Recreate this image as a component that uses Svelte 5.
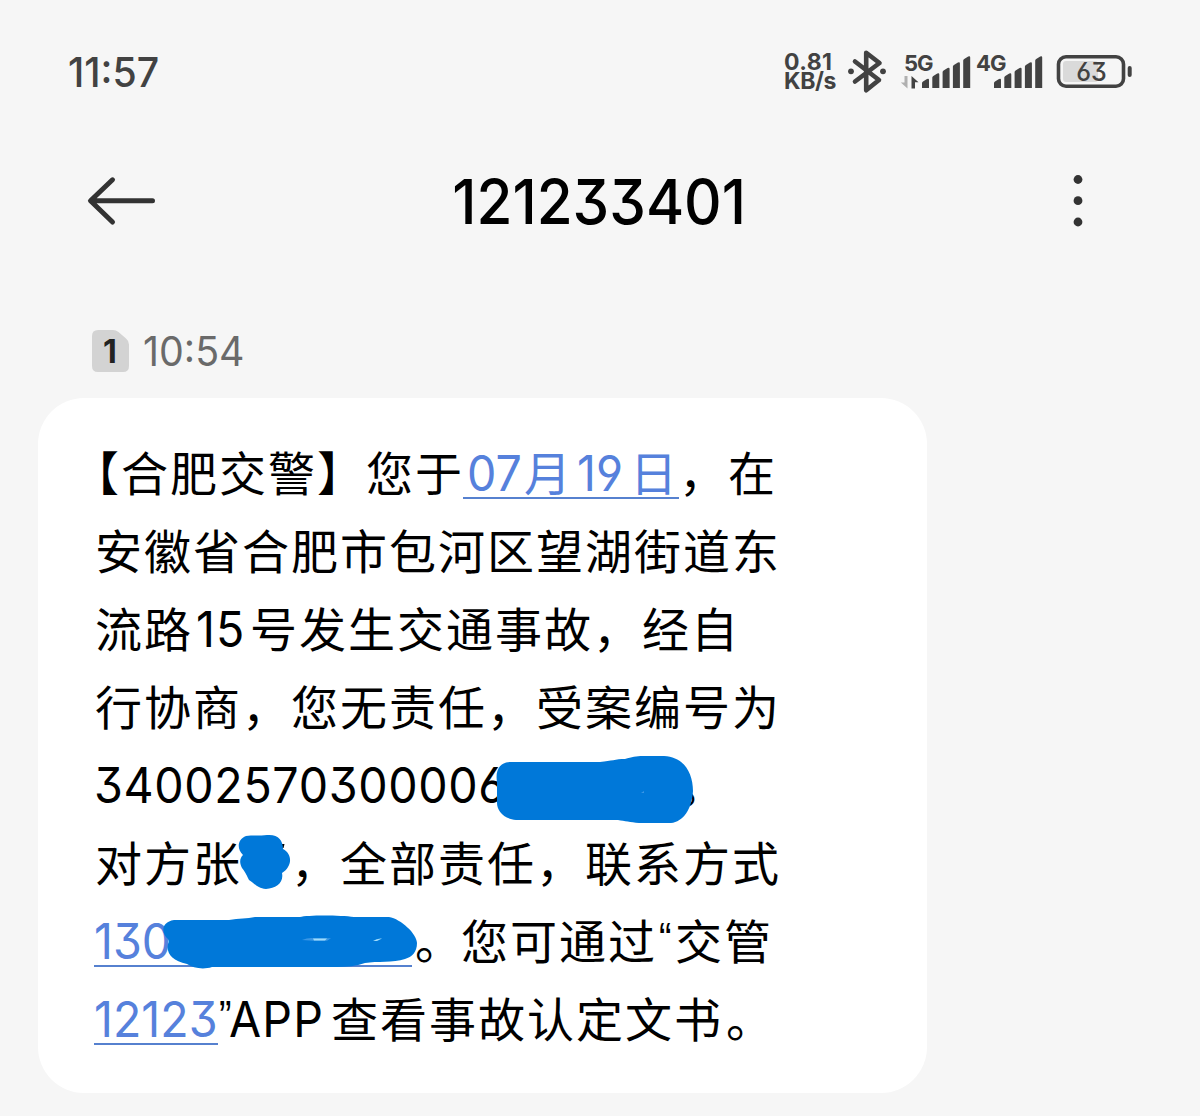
<script>
  const time = '11:57'
  const sender = '121233401'

  // w is the advance of a latin run, pad its left bearing; runs without w are Chinese text
  const lines = [
    [
      { text: '【合肥交警】您于' },
      {
        link: [
          { text: '07', w: 61, pad: 4 },
          { text: '月' },
          { text: '19', w: 57, pad: 4 },
          { text: '日' }
        ]
      },
      { text: '，在' }
    ],
    [{ text: '安徽省合肥市包河区望湖街道东' }],
    [{ text: '流路' }, { text: '15', w: 57, pad: 3, ls: 1 }, { text: '号发生交通事故，经自' }],
    [{ text: '行协商，您无责任，受案编号为' }],
    [{ text: '34002570300006', w: 580, pad: -1, ls: 0.7 }, { text: '。', stop: true }],
    [{ text: '对方张' }, { text: '', w: 49 }, { text: '，全部责任，联系方式' }],
    [
      { link: [{ text: '130', w: 318, pad: 0 }] },
      { text: '。', stop: true },
      { text: '您可通过' },
      { text: '“', w: 18, pad: 2, quote: true },
      { text: '交管' }
    ],
    [
      { link: [{ text: '12123', w: 124, pad: 0 }] },
      { text: '”', w: 12, pad: 1, quote: true },
      { text: 'APP', w: 101, pad: -1, ls: 1.3 },
      { text: '查看事故认定文书' },
      { text: '。', stop: true }
    ]
  ]

  const bars = [8, 13.5, 19, 24.5, 30.5]
</script>

{#snippet run(part)}
  {#if part.w}
    <span class="latin" class:quote={part.quote} style:width="{part.w}px">
      {#if part.text}
        <span class="digits" style:margin-left="{part.pad}px" style:letter-spacing="{part.ls ?? 0}px">{part.text}</span>
      {/if}
    </span>
  {:else}
    <span class="han" class:stop={part.stop}>{part.text}</span>
  {/if}
{/snippet}

{#snippet signal(x)}
  {#each bars as h, i}
    <path d="M{x + i * 10.3} 38v{-h + 3}q0 -1 1 -1.5l4 -2.5q2 -1 2 1v{h}z" />
  {/each}
{/snippet}

<div class="screen">
  <div class="status">
    <span class="clock">{time}</span>
    <div class="indicators">
      <div class="speed"><span class="rate">0.81</span><span>KB/s</span></div>
      <svg class="bluetooth" width="40" height="44" viewBox="0 0 40 44">
        <path d="M8 11.5 32 30 19.2 40.3V2.7L32.5 13 8 31.5" />
        <circle cx="4" cy="21.3" r="2.9" />
        <circle cx="36" cy="21.3" r="2.9" />
      </svg>
      <svg class="network" width="144" height="44" viewBox="0 0 144 44">
        <text x="4" y="20.5">5G</text>
        <text x="76" y="20.5">4G</text>
        <path class="idle" d="M7.500 26v12.500L.8 32.500h3.700V26z" />
        <path d="M11.500 38.500V26l7 6.300h-3.500v6.200z" />
        {@render signal(22)}
        {@render signal(94)}
      </svg>
      <svg class="battery" width="78" height="36" viewBox="0 0 78 36">
        <rect class="level" x="8" y="7" width="35" height="21" rx="3" />
        <rect class="case" x="3.5" y="2.8" width="65" height="29.4" rx="7.5" />
        <rect x="72.7" y="12" width="4" height="11" rx="2" />
        <text x="36.5" y="26.5">63</text>
      </svg>
    </div>
  </div>

  <header>
    <svg class="back" width="70" height="50" viewBox="0 0 70 50">
      <path d="M26.5 3.8 4.500 24.800l22 21.200M5.500 24.800h61" />
    </svg>
    <h1>{sender}</h1>
    <svg class="more" width="12" height="56" viewBox="0 0 12 56">
      <circle cx="6" cy="6.5" r="4.4" />
      <circle cx="6" cy="27.700" r="4.4" />
      <circle cx="6" cy="49" r="4.4" />
    </svg>
  </header>

  <div class="meta">
    <svg class="sim" width="37" height="42" viewBox="0 0 37 42">
      <path d="M6 0h15q3 0 5.500 2l7.500 6.500q3 2.500 3 6v21.500q0 6 -6 6H6q-6 0 -6 -6V6q0 -6 6 -6z" />
      <text x="18" y="33">1</text>
    </svg>
    <span class="sent">10:54</span>
  </div>

  <div class="bubble">
    {#each lines as line, i}
      <div class="line" class:hang={i === 0}>
        {#each line as part}
          {#if part.link}
            <span class="link">
              {#each part.link as piece}{@render run(piece)}{/each}
            </span>
          {:else}
            {@render run(part)}
          {/if}
        {/each}
      </div>
    {/each}

    <svg class="marker" width="889" height="695" viewBox="38 398 889 695">
      <path class="stroke-end" d="M280 844h4.500l-1 4h-4z" />
      <path
        d="M511 762H600C612 761 615 759 625 759C632 757 636 756 643 756H664C684 757 693 773 693 791C692 809 683 822 671 823H639C630 822 625 821 618 820H516C503 819 497 810 497 803V782C495 770 500 762 511 762z"
      />
      <path
        d="M246 836C252 835 260 836 267 835C278 834 283 840 283 849C294 855 291 868 282 873C284 883 276 888 266 889C257 888 254 883 249 880C247 876 246 873 242 868C239 862 240 858 243 855C236 848 238 839 246 836z"
      />
      <path
        d="M174 920H229C239 918 247 919 255 917H300C307 915 340 915 354 917H389C401 919 417 934 417 943C417 952 412 957 405 959C393 963 377 961 365 963C356 966 347 967 337 967H212C203 970 193 968 187 964C172 961 166 953 168 944C170 941 168 940 168 939C161 933 161 922 174 920z"
      />
      <path class="faint" d="M302 940q6 -2.500 12 -1.800h17l-4 2.600h-14z" />
      <path class="gap" d="M313 938.600h14l-2 2h-11z" />
      <path class="gap" d="M373 941q4 -3 9 -2.500l-5 2.500z" />
      <path class="faint" d="M641 793l3 -2v2z" />
    </svg>
  </div>
</div>

<style>
  :global(body) {
    margin: 0;
    background: #f6f6f6;
  }

  .screen {
    width: 1200px;
    height: 1116px;
    overflow: hidden;
    background: #f6f6f6;
    font-family: Inter, 'Noto Sans CJK SC', sans-serif;
    font-feature-settings: 'cv03', 'cv04', 'cv09';
    color: #000;
  }

  .status {
    display: flex;
    align-items: center;
    justify-content: space-between;
    height: 144px;
    padding: 0 67px 0 68px;
    color: #424242;
  }

  .clock {
    font-size: 41px;
    font-weight: 500;
    transform: scaleX(0.957);
    transform-origin: left;
  }

  .indicators {
    display: flex;
    align-items: center;
    fill: #424242;
  }

  .speed {
    display: flex;
    flex-direction: column;
    width: 63px;
    font-size: 23px;
    font-weight: 700;
    line-height: 19px;
    letter-spacing: -0.4px;
  }

  .rate {
    letter-spacing: 0.4px;
  }

  .bluetooth {
    margin-right: 13px;
  }

  .bluetooth path {
    fill: none;
    stroke: #424242;
    stroke-width: 4.6;
    stroke-linejoin: round;
    stroke-linecap: round;
  }

  .network {
    margin-right: 11px;
  }

  .network text {
    font-size: 22px;
    font-weight: 700;
    letter-spacing: -1px;
  }

  .network .idle {
    fill: #b0b0b0;
  }

  .battery .case {
    fill: none;
    stroke: #424242;
    stroke-width: 3.6;
  }

  .battery .level {
    fill: #dadada;
  }

  .battery text {
    font-size: 25px;
    font-weight: 500;
    text-anchor: middle;
  }

  header {
    display: flex;
    align-items: center;
    justify-content: space-between;
    height: 114px;
    padding: 0 116px 0 86px;
  }

  .back path {
    fill: none;
    stroke: #333;
    stroke-width: 5;
    stroke-linecap: round;
    stroke-linejoin: round;
  }

  .more {
    margin-left: 30px;
    fill: #333;
  }

  h1 {
    margin: 0;
    font-size: 62px;
    font-weight: 500;
    transform: scaleX(0.94);
  }

  .meta {
    display: flex;
    align-items: center;
    gap: 14px;
    height: 42px;
    padding: 72px 0 26px 92px;
  }

  .sim path {
    fill: #d3d3d3;
  }

  .sim text {
    fill: #222;
    font-size: 32px;
    font-weight: 700;
    text-anchor: middle;
  }

  .sent {
    font-size: 41px;
    color: #6a6a6a;
    transform: scaleX(0.96);
    transform-origin: left;
  }

  .bubble {
    position: relative;
    width: 832px;
    height: 658px;
    margin-left: 38px;
    padding: 37px 0 0 57px;
    border-radius: 46px;
    background: #fff;
  }

  .line {
    display: flex;
    align-items: center;
    height: 78px;
    white-space: nowrap;
  }

  /* the opening bracket hangs half a character outside the text column */
  .hang {
    margin-left: -23px;
  }

  .han {
    height: 50px;
    font-family: 'Noto Sans CJK SC', sans-serif;
    font-size: 47px;
    line-height: 43px;
    letter-spacing: 2px;
    font-feature-settings: normal;
    text-spacing-trim: space-all;
  }

  .stop {
    margin: 0 -3px 0 3px;
  }

  .latin {
    height: 50px;
    font-size: 49px;
    line-height: 50px;
  }

  .digits {
    display: inline-block;
    transform: scaleX(0.95);
    transform-origin: left;
  }

  .quote {
    font-family: 'Liberation Sans', sans-serif;
    font-size: 44px;
    line-height: 44px;
  }

  .quote .digits {
    transform: scaleX(0.85);
  }

  .link {
    display: flex;
    margin-left: -1px;
    color: #5681dc;
    box-shadow: inset 0 -2px #5681cf;
  }

  .marker {
    position: absolute;
    left: 0;
    top: 0;
    fill: #0078d9;
  }

  .marker .gap {
    fill: #9fdcfb;
  }

  .marker .faint {
    fill: #3a97e6;
  }

  .marker .stroke-end {
    fill: #000;
  }
</style>
